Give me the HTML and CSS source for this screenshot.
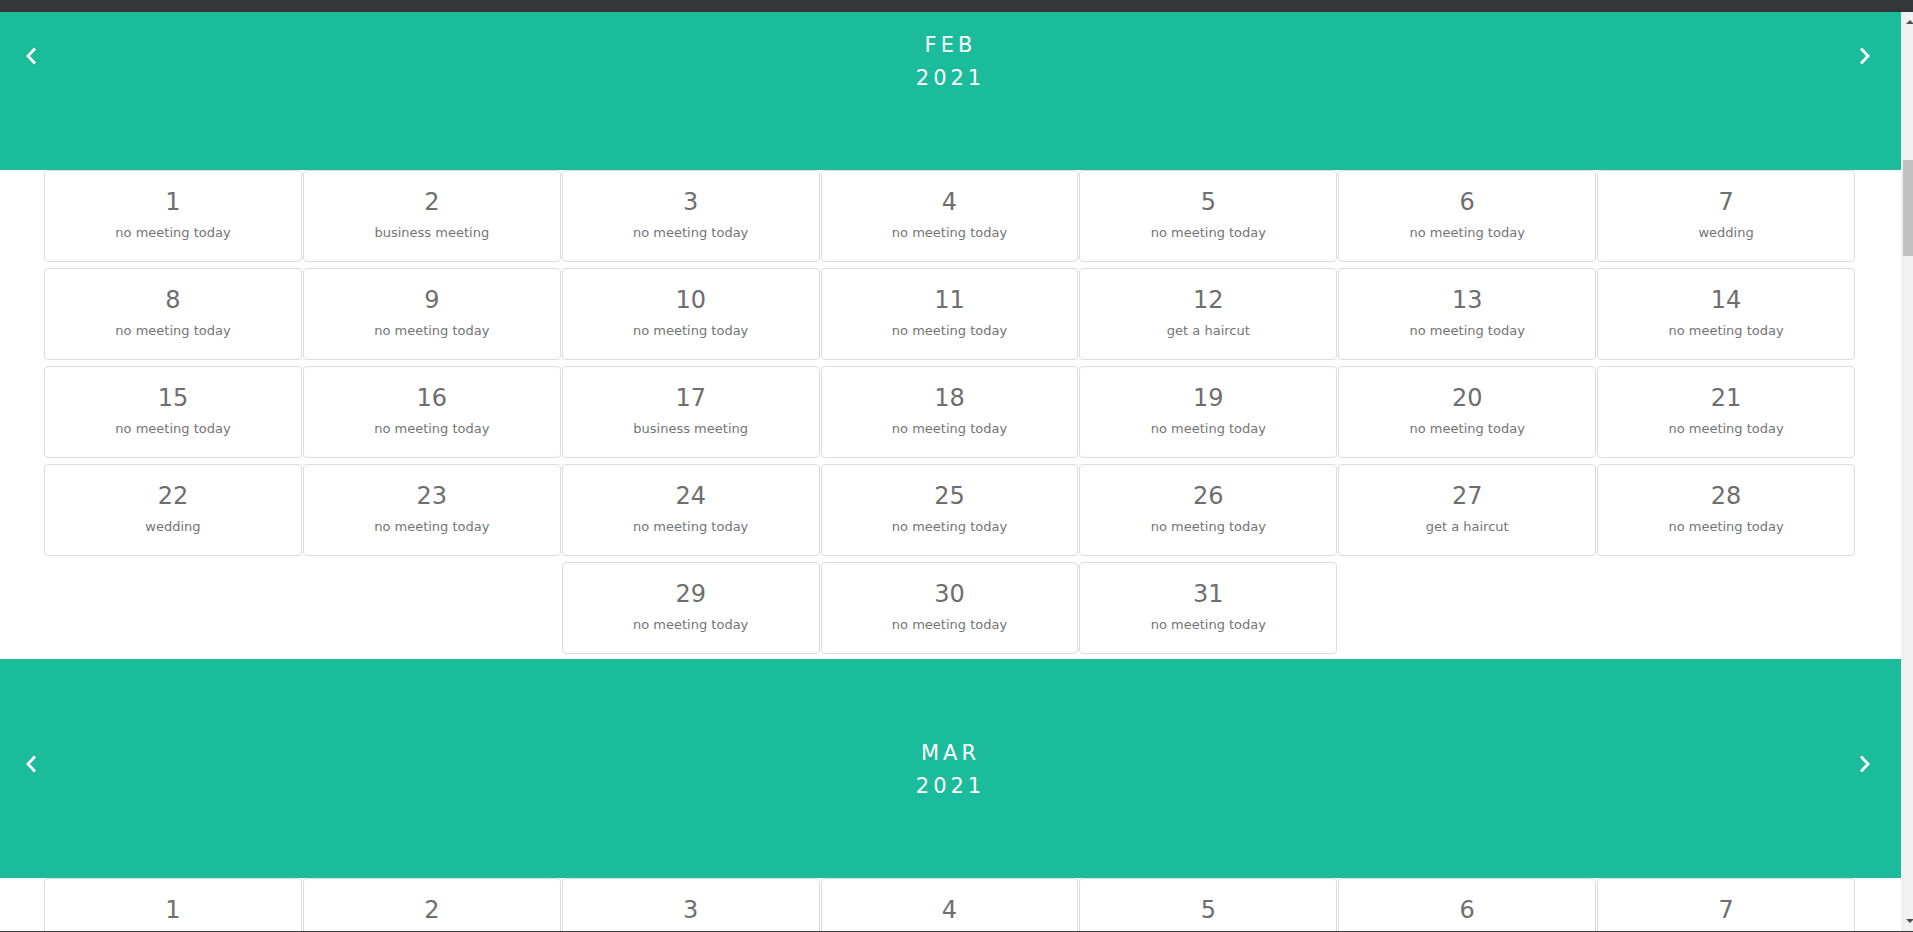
FILE: index.html
```html
<!DOCTYPE html>
<html lang="en">
<head>
<meta charset="utf-8">
<title>Calendar</title>
<link rel="stylesheet" href="styles.css">
</head>
<body>
<div class="frame-top"></div>
<div class="window">
  <div class="viewport">
    <div class="scroll-content">

      <section class="month">
        <header class="month-head">
          <button class="nav nav-prev" aria-label="previous month"><svg width="12" height="18" viewBox="0 0 12 18"><polyline points="10,1.5 3,9 10,16.5" /></svg></button>
          <div class="month-title"><div class="month-name">FEB</div><div class="month-year">2021</div></div>
          <button class="nav nav-next" aria-label="next month"><svg width="12" height="18" viewBox="0 0 12 18"><polyline points="2,1.5 9,9 2,16.5" /></svg></button>
        </header>
        <div class="days">
          <div class="day"><div class="day-num">1</div><div class="day-note">no meeting today</div></div>
          <div class="day"><div class="day-num">2</div><div class="day-note">business meeting</div></div>
          <div class="day"><div class="day-num">3</div><div class="day-note">no meeting today</div></div>
          <div class="day"><div class="day-num">4</div><div class="day-note">no meeting today</div></div>
          <div class="day"><div class="day-num">5</div><div class="day-note">no meeting today</div></div>
          <div class="day"><div class="day-num">6</div><div class="day-note">no meeting today</div></div>
          <div class="day"><div class="day-num">7</div><div class="day-note">wedding</div></div>
          <div class="day"><div class="day-num">8</div><div class="day-note">no meeting today</div></div>
          <div class="day"><div class="day-num">9</div><div class="day-note">no meeting today</div></div>
          <div class="day"><div class="day-num">10</div><div class="day-note">no meeting today</div></div>
          <div class="day"><div class="day-num">11</div><div class="day-note">no meeting today</div></div>
          <div class="day"><div class="day-num">12</div><div class="day-note">get a haircut</div></div>
          <div class="day"><div class="day-num">13</div><div class="day-note">no meeting today</div></div>
          <div class="day"><div class="day-num">14</div><div class="day-note">no meeting today</div></div>
          <div class="day"><div class="day-num">15</div><div class="day-note">no meeting today</div></div>
          <div class="day"><div class="day-num">16</div><div class="day-note">no meeting today</div></div>
          <div class="day"><div class="day-num">17</div><div class="day-note">business meeting</div></div>
          <div class="day"><div class="day-num">18</div><div class="day-note">no meeting today</div></div>
          <div class="day"><div class="day-num">19</div><div class="day-note">no meeting today</div></div>
          <div class="day"><div class="day-num">20</div><div class="day-note">no meeting today</div></div>
          <div class="day"><div class="day-num">21</div><div class="day-note">no meeting today</div></div>
          <div class="day"><div class="day-num">22</div><div class="day-note">wedding</div></div>
          <div class="day"><div class="day-num">23</div><div class="day-note">no meeting today</div></div>
          <div class="day"><div class="day-num">24</div><div class="day-note">no meeting today</div></div>
          <div class="day"><div class="day-num">25</div><div class="day-note">no meeting today</div></div>
          <div class="day"><div class="day-num">26</div><div class="day-note">no meeting today</div></div>
          <div class="day"><div class="day-num">27</div><div class="day-note">get a haircut</div></div>
          <div class="day"><div class="day-num">28</div><div class="day-note">no meeting today</div></div>
          <div class="day"><div class="day-num">29</div><div class="day-note">no meeting today</div></div>
          <div class="day"><div class="day-num">30</div><div class="day-note">no meeting today</div></div>
          <div class="day"><div class="day-num">31</div><div class="day-note">no meeting today</div></div>
        </div>
      </section>

      <section class="month">
        <header class="month-head">
          <button class="nav nav-prev" aria-label="previous month"><svg width="12" height="18" viewBox="0 0 12 18"><polyline points="10,1.5 3,9 10,16.5" /></svg></button>
          <div class="month-title"><div class="month-name">MAR</div><div class="month-year">2021</div></div>
          <button class="nav nav-next" aria-label="next month"><svg width="12" height="18" viewBox="0 0 12 18"><polyline points="2,1.5 9,9 2,16.5" /></svg></button>
        </header>
        <div class="days">
          <div class="day"><div class="day-num">1</div><div class="day-note">no meeting today</div></div>
          <div class="day"><div class="day-num">2</div><div class="day-note">business meeting</div></div>
          <div class="day"><div class="day-num">3</div><div class="day-note">no meeting today</div></div>
          <div class="day"><div class="day-num">4</div><div class="day-note">no meeting today</div></div>
          <div class="day"><div class="day-num">5</div><div class="day-note">no meeting today</div></div>
          <div class="day"><div class="day-num">6</div><div class="day-note">no meeting today</div></div>
          <div class="day"><div class="day-num">7</div><div class="day-note">wedding</div></div>
          <div class="day"><div class="day-num">8</div><div class="day-note">no meeting today</div></div>
          <div class="day"><div class="day-num">9</div><div class="day-note">no meeting today</div></div>
          <div class="day"><div class="day-num">10</div><div class="day-note">no meeting today</div></div>
          <div class="day"><div class="day-num">11</div><div class="day-note">no meeting today</div></div>
          <div class="day"><div class="day-num">12</div><div class="day-note">get a haircut</div></div>
          <div class="day"><div class="day-num">13</div><div class="day-note">no meeting today</div></div>
          <div class="day"><div class="day-num">14</div><div class="day-note">no meeting today</div></div>
          <div class="day"><div class="day-num">15</div><div class="day-note">no meeting today</div></div>
          <div class="day"><div class="day-num">16</div><div class="day-note">no meeting today</div></div>
          <div class="day"><div class="day-num">17</div><div class="day-note">business meeting</div></div>
          <div class="day"><div class="day-num">18</div><div class="day-note">no meeting today</div></div>
          <div class="day"><div class="day-num">19</div><div class="day-note">no meeting today</div></div>
          <div class="day"><div class="day-num">20</div><div class="day-note">no meeting today</div></div>
          <div class="day"><div class="day-num">21</div><div class="day-note">no meeting today</div></div>
          <div class="day"><div class="day-num">22</div><div class="day-note">wedding</div></div>
          <div class="day"><div class="day-num">23</div><div class="day-note">no meeting today</div></div>
          <div class="day"><div class="day-num">24</div><div class="day-note">no meeting today</div></div>
          <div class="day"><div class="day-num">25</div><div class="day-note">no meeting today</div></div>
          <div class="day"><div class="day-num">26</div><div class="day-note">no meeting today</div></div>
          <div class="day"><div class="day-num">27</div><div class="day-note">get a haircut</div></div>
          <div class="day"><div class="day-num">28</div><div class="day-note">no meeting today</div></div>
          <div class="day"><div class="day-num">29</div><div class="day-note">no meeting today</div></div>
          <div class="day"><div class="day-num">30</div><div class="day-note">no meeting today</div></div>
          <div class="day"><div class="day-num">31</div><div class="day-note">no meeting today</div></div>
        </div>
      </section>

    </div>
  </div>
  <div class="scrollbar" aria-hidden="true">
    <div class="sb-btn sb-up"><span class="sb-arrow-up"></span></div>
    <div class="sb-track"><div class="sb-thumb"></div></div>
    <div class="sb-btn sb-down"><span class="sb-arrow-down"></span></div>
  </div>
</div>
<div class="frame-bottom"></div>
</body>
</html>
```

FILE: styles.css
```css
html, body {
  margin: 0;
  padding: 0;
  height: 932px;
  overflow: hidden;
  background: #ffffff;
  font-family: "DejaVu Sans", Verdana, sans-serif;
}

.frame-top {
  height: 12px;
  background: #35363a;
}

.frame-bottom {
  height: 1px;
  background: #3a3a3a;
}

.window {
  display: flex;
  height: 919px;
}

.viewport {
  flex: 1;
  overflow: hidden;
  background: #ffffff;
}

/* page scrolled down by 61px */
.scroll-content {
  margin-top: -61px;
}

.month-head {
  box-sizing: border-box;
  height: 219px;
  padding-top: 3px;
  background: #1bbc9b;
  color: #ffffff;
  display: grid;
  grid-template-columns: 1fr auto 1fr;
  align-items: center;
}

.month-title {
  text-align: center;
  font-size: 21px;
  letter-spacing: 4px;
  line-height: 33px;
}

.nav {
  background: none;
  border: 0;
  padding: 0;
  margin: 0 0 12px 0;
  width: 12px;
  height: 18px;
  display: block;
  cursor: pointer;
}

.nav svg {
  display: block;
}

.nav polyline {
  fill: none;
  stroke: #ffffff;
  stroke-width: 2.8;
}

.nav-prev {
  justify-self: start;
  margin-left: 25px;
}

.nav-next {
  justify-self: end;
  margin-right: 30px;
}

.days {
  display: flex;
  flex-wrap: wrap;
  justify-content: center;
  gap: 6px 1px;
  margin: 0 46px 0 44px;
  padding-bottom: 5px;
}

.day {
  box-sizing: border-box;
  width: calc((100% - 6px) / 7);
  height: 92px;
  border: 1px solid #dcdcdc;
  border-radius: 4px;
  padding-top: 17px;
  text-align: center;
  color: #6e6e6e;
}

.day-num {
  font-size: 24px;
  line-height: 28px;
}

.day-note {
  margin-top: 9px;
  font-size: 13px;
  line-height: 15px;
  color: #747474;
}

.scrollbar {
  width: 12px;
  background: #f1f1f1;
  display: flex;
  flex-direction: column;
  overflow: hidden;
}

.sb-btn {
  height: 17px;
  flex: none;
  display: flex;
  padding-left: 5px;
}

.sb-up {
  align-items: flex-start;
  padding-top: 8px;
  box-sizing: border-box;
}

.sb-down {
  align-items: flex-end;
  padding-bottom: 8px;
  box-sizing: border-box;
}

.sb-arrow-up {
  width: 0;
  height: 0;
  border-left: 4px solid transparent;
  border-right: 4px solid transparent;
  border-bottom: 4px solid #505050;
}

.sb-arrow-down {
  width: 0;
  height: 0;
  border-left: 4px solid transparent;
  border-right: 4px solid transparent;
  border-top: 4px solid #505050;
}

.sb-track {
  flex: 1;
}

.sb-thumb {
  margin-top: 131px;
  margin-left: 2px;
  height: 96px;
  background: #c1c1c1;
}
```
